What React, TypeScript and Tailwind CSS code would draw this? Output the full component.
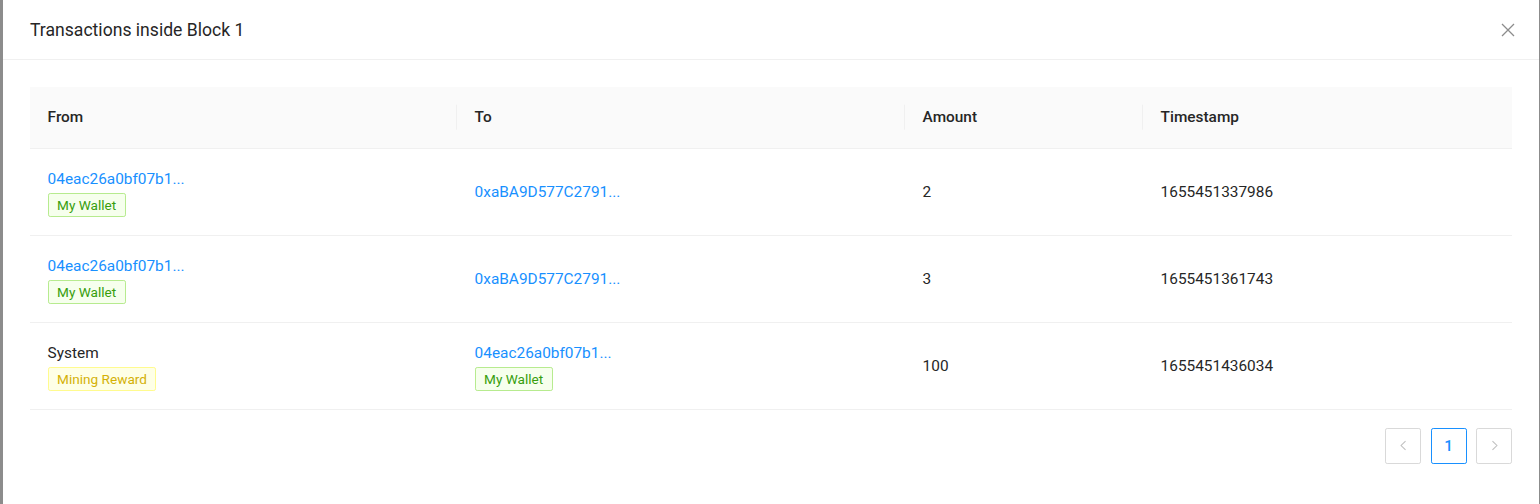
import React from "react";

interface Party {
  label: string;
  link: boolean;
  tag?: { text: string; tone: "green" | "yellow" };
}

interface Tx {
  from: Party;
  to: Party;
  amount: number;
  timestamp: number;
}

const wallet = { text: "My Wallet", tone: "green" as const };

const transactions: Tx[] = [
  {
    from: { label: "04eac26a0bf07b1...", link: true, tag: wallet },
    to: { label: "0xaBA9D577C2791...", link: true },
    amount: 2,
    timestamp: 1655451337986,
  },
  {
    from: { label: "04eac26a0bf07b1...", link: true, tag: wallet },
    to: { label: "0xaBA9D577C2791...", link: true },
    amount: 3,
    timestamp: 1655451361743,
  },
  {
    from: { label: "System", link: false, tag: { text: "Mining Reward", tone: "yellow" } },
    to: { label: "04eac26a0bf07b1...", link: true, tag: wallet },
    amount: 100,
    timestamp: 1655451436034,
  },
];

const Tag = ({ text, tone }: { text: string; tone: "green" | "yellow" }) => (
  <span
    className={
      tone === "green"
        ? "self-start mt-[2px] mb-[0.6px] h-[24px] px-[8.5px] text-[13.6px] leading-[22px] rounded-[2.2px] border border-[#b7eb8f] bg-[#f6ffed] text-[#389e0d]"
        : "self-start mt-[2px] mb-[0.6px] h-[24px] px-[8.5px] text-[13.6px] leading-[22px] rounded-[2.2px] border border-[#fffb8f] bg-[#feffe6] text-[#d4b106]"
    }
  >
    {text}
  </span>
);

const PartyCell = ({ party }: { party: Party }) => (
  <div className="flex flex-col px-[17.6px] py-[17.6px]">
    <span className={party.link ? "text-[#1890ff] cursor-pointer" : "text-[#262626]"}>
      {party.label}
    </span>
    {party.tag && <Tag text={party.tag.text} tone={party.tag.tone} />}
  </div>
);

const HeaderCell = ({ title, divider }: { title: string; divider?: boolean }) => (
  <div className="relative px-[17.6px] py-[18.5px] font-medium text-[#262626]">
    {title}
    {divider && (
      <span className="absolute right-0 top-1/2 -translate-y-1/2 h-[24.6px] w-px bg-[#f0f0f0]" />
    )}
  </div>
);

const Chevron = ({ dir }: { dir: "left" | "right" }) => (
  <svg width="13" height="13" viewBox="0 0 16 16" fill="none">
    <path
      d={dir === "left" ? "M10.5 2.5 5 8l5.5 5.5" : "M5.5 2.5 11 8l-5.5 5.5"}
      stroke="#bfbfbf"
      strokeWidth="1.3"
    />
  </svg>
);

export default function App() {
  return (
    <div className="flex h-[504px] w-full bg-[#8c8c8c] pl-[3px] pr-[1.5px] font-['Segoe_UI',Roboto,'Helvetica_Neue',Arial,sans-serif] text-[15.4px] leading-[24.2px] text-[#262626]">
      <div className="flex-1 bg-white">
        <div className="flex items-center justify-between border-b border-[#f0f0f0] pl-[27px] pr-[26.4px] py-[17.6px]">
          <h2 className="text-[17.6px] leading-[24.2px] font-normal text-[#262626]">
            Transactions inside Block 1
          </h2>
          <button className="mr-[-4.4px] flex h-[17.6px] w-[17.6px] items-center justify-center">
            <svg width="16" height="16" viewBox="0 0 16 16" fill="none">
              <path d="M2 2l12 12M14 2 2 14" stroke="#8c8c8c" strokeWidth="1.3" />
            </svg>
          </button>
        </div>

        <div className="pl-[27px] pr-[26.4px] py-[26.4px]">
          <div className="grid grid-cols-[427px_448px_238px_1fr] items-center border-b border-[#f0f0f0] bg-[#fafafa]">
            <HeaderCell title="From" divider />
            <HeaderCell title="To" divider />
            <HeaderCell title="Amount" divider />
            <HeaderCell title="Timestamp" />
          </div>

          {transactions.map((tx, index) => (
            <div
              key={index}
              className="grid grid-cols-[427px_448px_238px_1fr] items-center border-b border-[#f0f0f0]"
            >
              <PartyCell party={tx.from} />
              <PartyCell party={tx.to} />
              <div className="px-[17.6px]">{tx.amount}</div>
              <div className="px-[17.6px]">{tx.timestamp}</div>
            </div>
          ))}

          <div className="mt-[18px] flex justify-end gap-[9.5px]">
            <button className="flex h-[36px] w-[36px] items-center justify-center rounded-[2.2px] border border-[#d9d9d9] bg-white">
              <Chevron dir="left" />
            </button>
            <button className="flex h-[36px] w-[36px] items-center justify-center rounded-[2.2px] border border-[#1890ff] bg-white font-medium text-[#1890ff]">
              1
            </button>
            <button className="flex h-[36px] w-[36px] items-center justify-center rounded-[2.2px] border border-[#d9d9d9] bg-white">
              <Chevron dir="right" />
            </button>
          </div>
        </div>
      </div>
    </div>
  );
}
